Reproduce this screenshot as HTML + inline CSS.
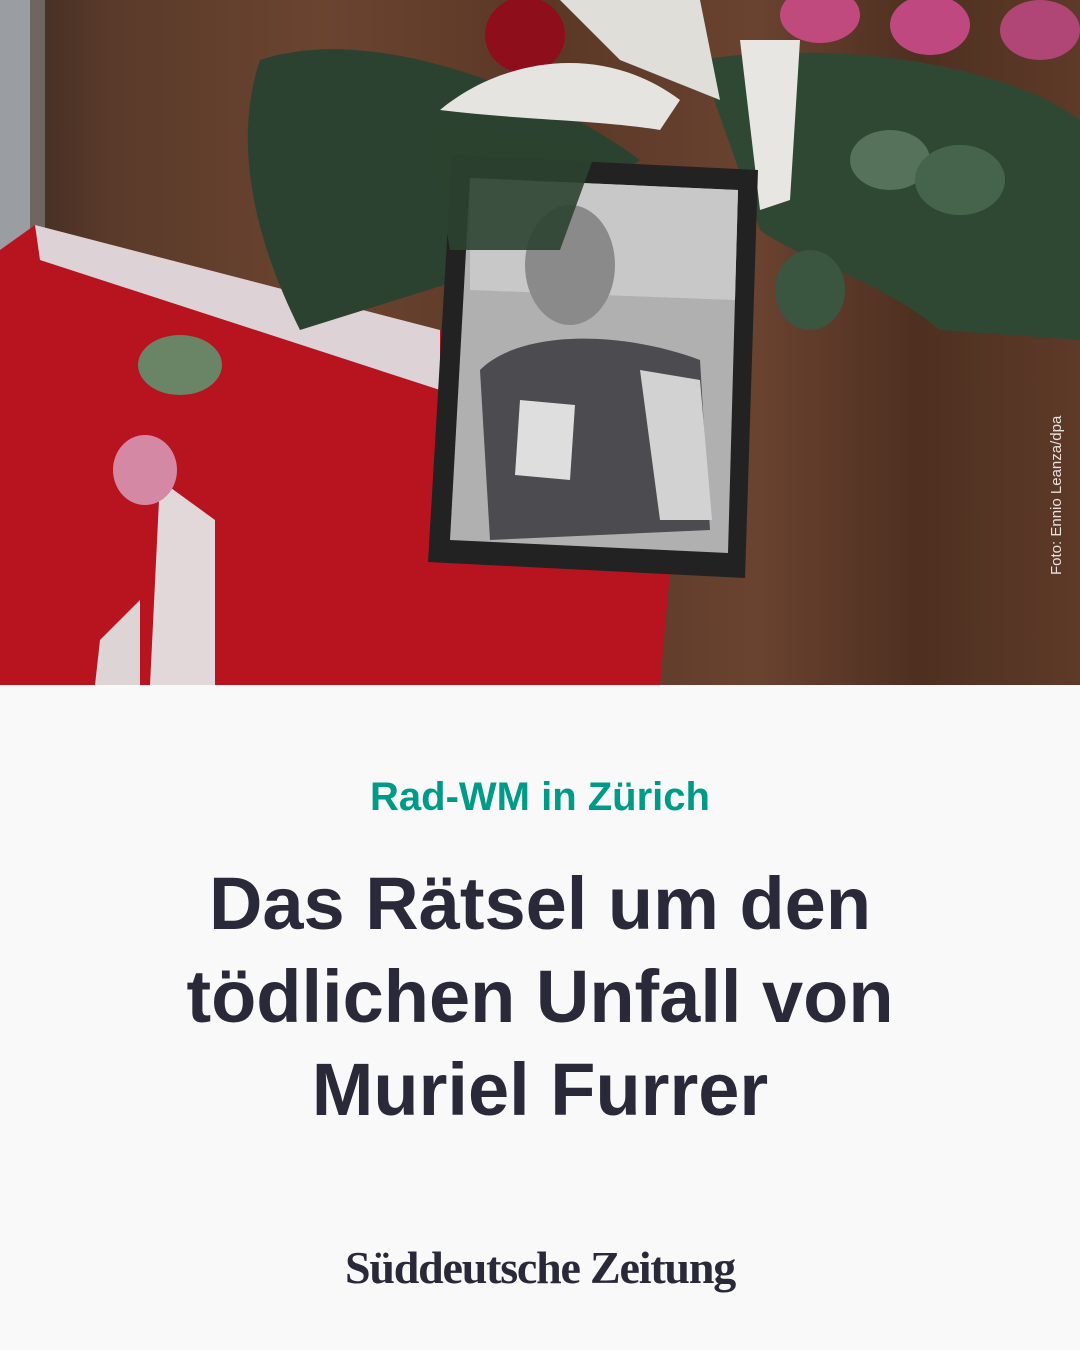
<!DOCTYPE html>
<html><head><meta charset="utf-8"><style>
html,body{margin:0;padding:0}
body{width:1080px;height:1350px;background:#f9f9f9;position:relative;overflow:hidden;font-family:"Liberation Sans",sans-serif}
.photo{position:absolute;left:0;top:0;width:1080px;height:685px;overflow:hidden;background:linear-gradient(90deg,#3a2a22 0%,#5a3a2a 10%,#6b4430 30%,#5a3826 50%,#6a4230 70%,#4e3020 85%,#5e3a28 100%)}
.kicker{position:absolute;top:775px;left:0;width:1080px;text-align:center;color:#009a88;font-weight:bold;font-size:40px;letter-spacing:0}
.head{position:absolute;top:857px;left:0;width:1080px;text-align:center;color:#29293a;font-weight:bold;font-size:74px;line-height:93px;letter-spacing:0}
.logo{position:absolute;top:1241px;left:0;width:1080px;text-align:center;color:#29293a;font-family:"Liberation Serif",serif;font-weight:bold;font-size:46px;letter-spacing:-1.2px}
.credit{position:absolute;left:1048px;top:575px;transform-origin:0 0;transform:rotate(-90deg);color:#e8e2dc;font-size:15px;white-space:nowrap}
</style></head><body>
<div class="photo">
<svg width="1080" height="685" viewBox="0 0 1080 685" style="position:absolute;left:0;top:0">
<rect x="0" y="0" width="45" height="685" fill="#6e6660"/>
<rect x="0" y="0" width="30" height="300" fill="#9a9ea2"/>
<path d="M35 225 L440 330 L670 570 L660 685 L0 685 L0 250 Z" fill="#b8141f"/>
<path d="M35 225 L440 330 L440 390 L40 260 Z" fill="#ddd2d6"/>
<path d="M160 480 L215 520 L215 685 L150 685 Z" fill="#e2d8da"/>
<path d="M100 640 L140 600 L140 685 L95 685 Z" fill="#ddd4d6"/>
<path d="M260 60 C380 20 560 100 640 160 L460 280 L300 330 C260 250 230 150 260 60Z" fill="#2b4230"/>
<path d="M700 60 C820 40 1000 60 1080 120 L1080 340 L940 330 C880 280 800 260 760 230 Z" fill="#2f4833"/>
<ellipse cx="180" cy="365" rx="42" ry="30" fill="#6a8466"/>
<ellipse cx="145" cy="470" rx="32" ry="35" fill="#d488a4"/>
<ellipse cx="890" cy="160" rx="40" ry="30" fill="#56725a"/>
<ellipse cx="810" cy="290" rx="35" ry="40" fill="#3a5640"/>
<ellipse cx="960" cy="180" rx="45" ry="35" fill="#46644c"/>
<ellipse cx="525" cy="35" rx="40" ry="38" fill="#8e0e1c"/>
<path d="M440 110 C500 60 600 40 680 100 L660 130 C600 120 520 120 440 110Z" fill="#e6e4e0"/>
<path d="M560 0 L700 0 L720 100 L620 60 Z" fill="#e0ded9"/>
<path d="M740 40 L800 40 L790 200 L760 210 Z" fill="#e8e6e2"/>
<ellipse cx="820" cy="15" rx="40" ry="28" fill="#c04a7e"/>
<ellipse cx="930" cy="25" rx="40" ry="30" fill="#c04880"/>
<ellipse cx="1040" cy="30" rx="40" ry="30" fill="#b04676"/>
<path d="M452 155 L758 170 L745 578 L428 562 Z" fill="#222"/>
<path d="M470 178 L738 190 L728 553 L450 540 Z" fill="#b0b0b0"/>
<path d="M470 178 L738 190 L735 300 L470 290Z" fill="#c8c8c8"/>
<ellipse cx="570" cy="265" rx="45" ry="60" fill="#8a8a8a"/>
<path d="M480 370 C520 330 620 330 700 360 L710 530 L490 540 Z" fill="#4b4b50"/>
<path d="M520 400 L575 405 L570 480 L515 475Z" fill="#dedede"/>
<path d="M640 370 L700 380 L712 520 L660 520Z" fill="#d2d2d2"/>
<path d="M430 130 L600 140 L560 250 L450 250 Z" fill="#2b4230" opacity=".9"/>
</svg>
<div class="credit">Foto: Ennio Leanza/dpa</div>
</div>
<div class="kicker">Rad-WM in Zürich</div>
<div class="head">Das Rätsel um den<br>tödlichen Unfall von<br>Muriel Furrer</div>
<div class="logo">Süddeutsche Zeitung</div>
</body></html>
